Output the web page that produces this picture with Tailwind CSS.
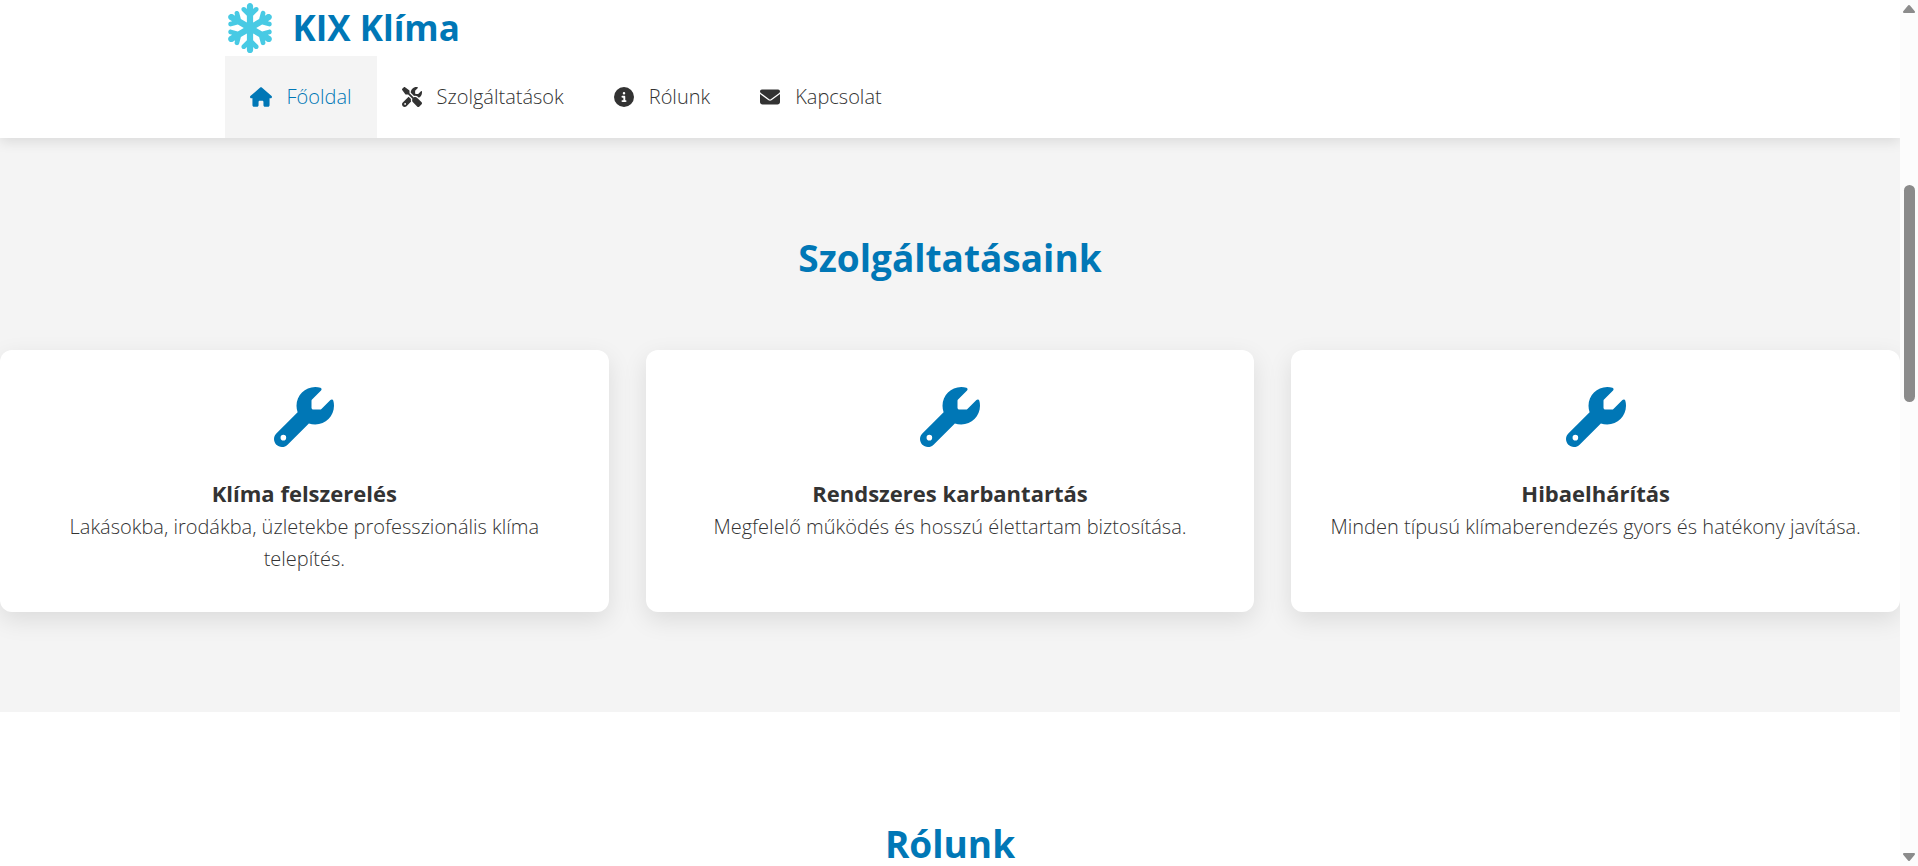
<!DOCTYPE html>
<html lang="hu">
<head>
    <meta charset="UTF-8">
    <meta name="viewport" content="width=device-width, initial-scale=1.0">
    <title>KIX Klíma</title>
    <script src="https://cdn.jsdelivr.net/npm/@tailwindcss/browser@4"></script>
</head>

<body class="flex h-screen overflow-hidden bg-white font-['Open_Sans','Noto_Sans',sans-serif] text-[20px] leading-8 font-light text-[#333]">
    <!-- Shared icon shapes -->
    <svg class="hidden">
        <symbol id="wrench" viewBox="0 0 512 512">
            <path d="M352 320c88.4 0 160-71.6 160-160c0-15.3-2.2-30.1-6.2-44.2c-3.1-10.8-16.4-13.2-24.3-5.3l-76.8 76.8c-3 3-7.1 4.7-11.3 4.7H336c-8.8 0-16-7.2-16-16V118.6c0-4.2 1.7-8.3 4.7-11.3l76.8-76.8c7.9-7.9 5.4-21.2-5.3-24.3C382.1 2.2 367.3 0 352 0C263.6 0 192 71.6 192 160c0 19.1 3.4 37.5 9.5 54.5L19.9 396.1C7.2 408.8 0 426.1 0 444.1C0 481.6 30.4 512 67.9 512c18 0 35.3-7.2 48-19.9L297.5 310.5c17 6.2 35.4 9.5 54.5 9.5zM80 408a24 24 0 1 1 0 48 24 24 0 1 1 0-48z" />
        </symbol>
    </svg>

    <div class="flex-1 min-w-0 overflow-hidden">
        <!-- Header -->
        <header class="relative z-10 bg-white shadow-[0_4px_12px_rgba(0,0,0,0.1)]">
            <div class="max-w-[1451px] mx-auto">
                <a href="#" class="flex items-center gap-[18px] h-14 text-[35px] font-bold text-[#0077b6]">
                    <svg class="size-[50px] text-[#48cae4]" viewBox="0 0 448 512" fill="currentColor">
                        <path d="M224 0c17.7 0 32 14.3 32 32V62.1l15-15c9.4-9.4 24.6-9.4 33.9 0s9.4 24.6 0 33.9l-49 49v70.3l61.4-35.8 17.7-66.1c3.4-12.8 16.6-20.4 29.4-17s20.4 16.6 17 29.4l-5.2 19.3 23.6-13.8c15.3-8.9 34.9-3.7 43.8 11.5s3.8 34.9-11.5 43.8l-25.3 14.8 21.7 5.8c12.8 3.4 20.4 16.6 17 29.4s-16.6 20.4-29.4 17l-67.7-18.1L287.5 256l60.9 35.5 67.7-18.1c12.8-3.4 26 4.2 29.4 17s-4.2 26-17 29.4l-21.7 5.8 25.3 14.8c15.3 8.9 20.4 28.5 11.5 43.8s-28.5 20.4-43.8 11.5l-23.6-13.8 5.2 19.3c3.4 12.8-4.2 26-17 29.4s-26-4.2-29.4-17l-17.7-66.1L256 311.7v70.3l49 49c9.4 9.4 9.4 24.6 0 33.9s-24.6 9.4-33.9 0l-15-15V480c0 17.7-14.3 32-32 32s-32-14.3-32-32V449.9l-15 15c-9.4 9.4-24.6 9.4-33.9 0s-9.4-24.6 0-33.9l49-49V311.7l-61.4 35.8-17.7 66.1c-3.4 12.8-16.6 20.4-29.4 17s-20.4-16.6-17-29.4l5.2-19.3L48.1 395.6c-15.3 8.9-34.9 3.7-43.8-11.5s-3.7-34.9 11.5-43.8l25.3-14.8-21.7-5.8c-12.8-3.4-20.4-16.6-17-29.4s16.6-20.4 29.4-17l67.7 18.1L160.5 256 99.6 220.5 31.9 238.6c-12.8 3.4-26-4.2-29.4-17s4.2-26 17-29.4l21.7-5.8L15.9 171.6C.6 162.7-4.5 143.1 4.4 127.9s28.5-20.4 43.8-11.5l23.6 13.8-5.2-19.3c-3.4-12.8 4.2-26 17-29.4s26 4.2 29.4 17l17.7 66.1L192 200.3V129.9L143 81c-9.4-9.4-9.4-24.6 0-33.9s24.6-9.4 33.9 0l15 15V32c0-17.7 14.3-32 32-32z" />
                    </svg>
                    <span>KIX Klíma</span>
                </a>
                <nav class="flex">
                    <a href="#" class="flex items-center gap-[15px] p-[25px] bg-[#f4f4f4] text-[#0077b6]">
                        <svg class="h-5 w-[22px]" viewBox="0 0 576 512" fill="currentColor">
                            <path d="M575.8 255.5c0 18-15 32.1-32 32.1h-32l.7 160.2c0 2.7-.2 5.4-.5 8.1V472c0 22.1-17.9 40-40 40H456c-1.1 0-2.2 0-3.3-.1c-1.4 .1-2.8 .1-4.2 .1H416 392c-22.1 0-40-17.9-40-40V448 384c0-17.7-14.3-32-32-32H256c-17.7 0-32 14.3-32 32v64 24c0 22.1-17.9 40-40 40H160 128.1c-1.5 0-3-.1-4.5-.2c-1.2 .1-2.4 .2-3.6 .2H104c-22.1 0-40-17.9-40-40V360c0-.9 0-1.9 .1-2.8V287.6H32c-18 0-32-14-32-32.1c0-9 3-17 10-24L266.4 8c7-7 15-8 22-8s15 2 21 7L564.8 231.5c8 7 12 15 11 24z" />
                        </svg>
                        Főoldal
                    </a>
                    <a href="#szolgaltatasok" class="flex items-center gap-[15px] p-[25px]">
                        <svg class="size-5" viewBox="0 0 512 512" fill="currentColor">
                            <path d="M78.6 5C69.1-2.4 55.6-1.5 47 7L7 47c-8.5 8.5-9.4 22-2.1 31.6l80 104c4.5 5.9 11.6 9.4 19 9.4h54.1l109 109c-14.7 29-10 65.4 14.3 89.6l112 112c12.5 12.5 32.8 12.5 45.3 0l64-64c12.5-12.5 12.5-32.8 0-45.3l-112-112c-24.2-24.2-60.6-29-89.6-14.3l-109-109V104c0-7.5-3.5-14.5-9.4-19L78.6 5zM19.9 396.1C7.2 408.8 0 426.1 0 444.1C0 481.6 30.4 512 67.9 512c18 0 35.3-7.2 48-19.9L233.7 374.3c-7.8-20.9-9-43.6-3.6-65.1l-61.7-61.7L19.9 396.1zM512 144c0-10.5-1.1-20.7-3.2-30.5c-2.4-11.2-16.1-14.1-24.2-6l-63.9 63.9c-3 3-7.1 4.7-11.3 4.7H352c-8.8 0-16-7.2-16-16V102.6c0-4.2 1.7-8.3 4.7-11.3l63.9-63.9c8.1-8.1 5.2-21.8-6-24.2C388.7 1.1 378.5 0 368 0C288.5 0 224 64.5 224 144l0 .8 85.3 85.3c36-9.1 75.8 .5 104 28.7L429 274.5c49-23 83-72.8 83-130.5zM56 432a24 24 0 1 1 48 0 24 24 0 1 1 -48 0z" />
                        </svg>
                        Szolgáltatások
                    </a>
                    <a href="#rolunk" class="flex items-center gap-[15px] p-[25px]">
                        <svg class="size-5" viewBox="0 0 512 512" fill="currentColor">
                            <path d="M256 512A256 256 0 1 0 256 0a256 256 0 1 0 0 512zM216 336h24V272H216c-13.3 0-24-10.7-24-24s10.7-24 24-24h48c13.3 0 24 10.7 24 24v88h8c13.3 0 24 10.7 24 24s-10.7 24-24 24H216c-13.3 0-24-10.7-24-24s10.7-24 24-24zm40-208a32 32 0 1 1 0 64 32 32 0 1 1 0-64z" />
                        </svg>
                        Rólunk
                    </a>
                    <a href="#kapcsolat" class="flex items-center gap-[15px] p-[25px]">
                        <svg class="size-5" viewBox="0 0 512 512" fill="currentColor">
                            <path d="M48 64C21.5 64 0 85.5 0 112c0 15.1 7.1 29.3 19.2 38.4L236.8 313.6c11.4 8.5 27 8.5 38.4 0L492.8 150.4c12.1-9.1 19.2-23.3 19.2-38.4c0-26.5-21.5-48-48-48H48zM0 176V384c0 35.3 28.7 64 64 64H448c35.3 0 64-28.7 64-64V176L294.4 339.2c-22.8 17.1-54 17.1-76.8 0L0 176z" />
                        </svg>
                        Kapcsolat
                    </a>
                </nav>
            </div>
        </header>

        <!-- Services -->
        <section id="szolgaltatasok" class="bg-[#f4f4f4] pt-[88px] pb-[100px] text-center overflow-hidden">
            <h2 class="mb-[60px] text-[37px] leading-[64px] font-bold text-[#0077b6]">Szolgáltatásaink</h2>
            <div class="grid grid-cols-3 gap-[37px]">
                <div class="bg-white rounded-xl p-[37px] shadow-[0_8px_24px_rgba(0,0,0,0.1)]">
                    <svg class="size-[60px] mx-auto mb-7 text-[#0077b6]" fill="currentColor"><use href="#wrench" /></svg>
                    <h3 class="text-[22px] leading-9 font-bold">Klíma felszerelés</h3>
                    <p>Lakásokba, irodákba, üzletekbe professzionális klíma telepítés.</p>
                </div>
                <div class="bg-white rounded-xl p-[37px] shadow-[0_8px_24px_rgba(0,0,0,0.1)]">
                    <svg class="size-[60px] mx-auto mb-7 text-[#0077b6]" fill="currentColor"><use href="#wrench" /></svg>
                    <h3 class="text-[22px] leading-9 font-bold">Rendszeres karbantartás</h3>
                    <p>Megfelelő működés és hosszú élettartam biztosítása.</p>
                </div>
                <div class="bg-white rounded-xl p-[37px] shadow-[0_8px_24px_rgba(0,0,0,0.1)]">
                    <svg class="size-[60px] mx-auto mb-7 text-[#0077b6]" fill="currentColor"><use href="#wrench" /></svg>
                    <h3 class="text-[22px] leading-9 font-bold">Hibaelhárítás</h3>
                    <p>Minden típusú klímaberendezés gyors és hatékony javítása.</p>
                </div>
            </div>
        </section>

        <!-- About -->
        <section id="rolunk" class="bg-white py-[100px] text-center">
            <h2 class="text-[37px] leading-[64px] font-bold text-[#0077b6]">Rólunk</h2>
        </section>
    </div>

    <!-- Scrollbar -->
    <div class="flex flex-col items-center w-[18px] shrink-0 bg-[#fcfcfc] py-1 text-[#8b8b8b]">
        <svg class="w-3 h-[10px]" viewBox="0 0 12 10" fill="currentColor" stroke="currentColor" stroke-width="2" stroke-linejoin="round"><path d="M6 2l5 6H1z" /></svg>
        <div class="w-full flex-1 flex flex-col items-center pt-[171px]">
            <div class="w-[11px] h-[217px] rounded-full bg-[#8b8b8b]"></div>
        </div>
        <svg class="w-3 h-[10px]" viewBox="0 0 12 10" fill="currentColor" stroke="currentColor" stroke-width="2" stroke-linejoin="round"><path d="M1 2h10l-5 6z" /></svg>
    </div>
</body>
</html>
